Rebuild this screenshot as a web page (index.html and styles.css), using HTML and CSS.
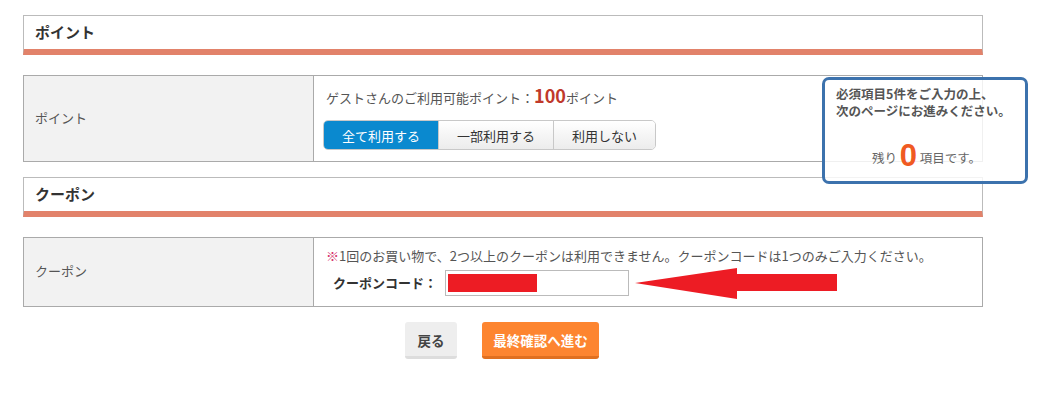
FILE: index.html
```html
<!DOCTYPE html>
<html lang="ja">
<head>
<meta charset="utf-8">
<link rel="stylesheet" href="styles.css">
</head>
<body>
<div class="wrap">
  <div class="sec-head">ポイント</div>
  <div class="tbl tbl-point">
    <div class="th">ポイント</div>
    <div class="td">
      <div class="avail">ゲストさんのご利用可能ポイント：<span class="num">100</span>ポイント</div>
      <div class="seg">
        <span class="seg-btn active">全て利用する</span>
        <span class="seg-btn">一部利用する</span>
        <span class="seg-btn last">利用しない</span>
      </div>
    </div>
  </div>

  <div class="sec-head sec-coupon">クーポン</div>
  <div class="tbl tbl-coupon">
    <div class="th">クーポン</div>
    <div class="td">
      <div class="note"><span class="mark">※</span>1回のお買い物で、2つ以上のクーポンは利用できません。クーポンコードは1つのみご入力ください。</div>
      <div class="code-row">
        <span class="code-label">クーポンコード：</span>
        <span class="code-input"><span class="redact"></span></span>
        <svg class="arrow" width="203" height="32" viewBox="0 0 203 32"><polygon points="0,15 102,0 102,6 202,6 202,23 102,23 102,31" fill="#ed1c24"/></svg>
      </div>
    </div>
  </div>

  <div class="actions">
    <span class="btn btn-back">戻る</span>
    <span class="btn btn-next">最終確認へ進む</span>
  </div>
</div>

<div class="float-box">
  <div class="fb-msg">必須項目5件をご入力の上、<br>次のページにお進みください。</div>
  <div class="fb-count">残り <span class="zero">0</span> 項目です。</div>
</div>
</body>
</html>
```
FILE: styles.css
```css
* { box-sizing: border-box; }
html, body { margin: 0; padding: 0; background: #fff; }
body {
  font-family: "Noto Sans CJK JP", "Noto Sans", sans-serif;
  font-size: 13px;
  color: #555;
}
.wrap {
  width: 960px;
  margin-left: 23px;
  padding-top: 15px;
}
.sec-head {
  height: 40px;
  border: 1px solid #bbb;
  border-bottom: 6px solid #e2826a;
  padding: 0 0 2px 11px;
  display: flex;
  align-items: center;
  font-size: 15px;
  font-weight: bold;
  color: #333;
}
.sec-coupon { margin-top: 15px; }
.tbl {
  margin-top: 20px;
  display: flex;
  border: 1px solid #aaa;
}
.tbl-point { height: 87px; }
.tbl-coupon { height: 70px; }
.th {
  width: 290px;
  flex: none;
  background: #f2f2f2;
  border-right: 1px solid #aaa;
  display: flex;
  align-items: center;
  padding: 0 0 3px 11px;
  color: #555;
}
.td {
  flex: 1;
  padding-left: 12px;
}
.tbl-point .td { padding-top: 10px; }
.avail { line-height: 24px; height: 24px; color: #555; }
.num { color: #c0392b; font-weight: bold; font-size: 18px; line-height: 1; }
.seg {
  display: flex;
  width: max-content;
  margin: 10px 0 0 -3px;
  height: 30px;
  border: 1px solid #c8c8c8;
  border-radius: 5px;
  overflow: hidden;
}
.seg-btn {
  width: 115px;
  display: flex;
  align-items: center;
  justify-content: center;
  color: #333;
  background: linear-gradient(#fff, #ececec);
  border-left: 1px solid #c8c8c8;
}
.seg-btn.active {
  border-left: none;
  background: #0a89cf;
  color: #fff;
  width: 114px;
}
.seg-btn.last { width: 102px; }
.tbl-coupon .td { padding-top: 7px; }
.note { line-height: 22px; height: 22px; color: #555; }
.mark { color: #d6336c; }
.code-row {
  display: flex;
  align-items: flex-start;
  height: 26px;
  margin-top: 3px;
}
.code-label {
  align-self: center;
  font-weight: bold;
  color: #333;
  width: 119px;
  padding-left: 7px;
  line-height: 20px;
}
.code-input {
  width: 184px;
  height: 26px;
  border: 1px solid #bbb;
  padding: 3px 0 0 2px;
  background: #fff;
}
.redact {
  display: block;
  width: 89px;
  height: 18px;
  background: #ed1c24;
}
.arrow { margin-left: 6px; margin-top: -2px; flex: none; }
.actions {
  margin-top: 15px;
  display: flex;
  justify-content: center;
  gap: 25px;
  padding-right: 2px;
}
.btn {
  height: 37px;
  display: flex;
  align-items: center;
  justify-content: center;
  border-radius: 3px;
  font-weight: bold;
  font-size: 13.5px;
  padding-top: 1px;
}
.btn-back {
  width: 52px;
  background: #eee;
  border-bottom: 3px solid #ddd;
  color: #444;
}
.btn-next {
  width: 117px;
  background: #fd8530;
  border-bottom: 3px solid #e07020;
  color: #fff;
}
.float-box {
  position: absolute;
  left: 822px;
  top: 77px;
  width: 206px;
  height: 107px;
  border: 3px solid #3c72ad;
  border-radius: 7px;
  background: rgba(255, 255, 255, 0.82);
  padding: 5px 0 0 11px;
}
.fb-msg {
  font-size: 12.5px;
  font-weight: bold;
  color: #555;
  line-height: 17px;
}
.fb-count {
  margin-top: 20px;
  text-align: center;
  padding-right: 8px;
  font-size: 12.5px;
  color: #666;
  line-height: 34px;
}
.zero {
  color: #f05a22;
  font-size: 31px;
  font-weight: bold;
  font-family: "Liberation Sans", Arial, sans-serif;
  vertical-align: -3px;
}
```
